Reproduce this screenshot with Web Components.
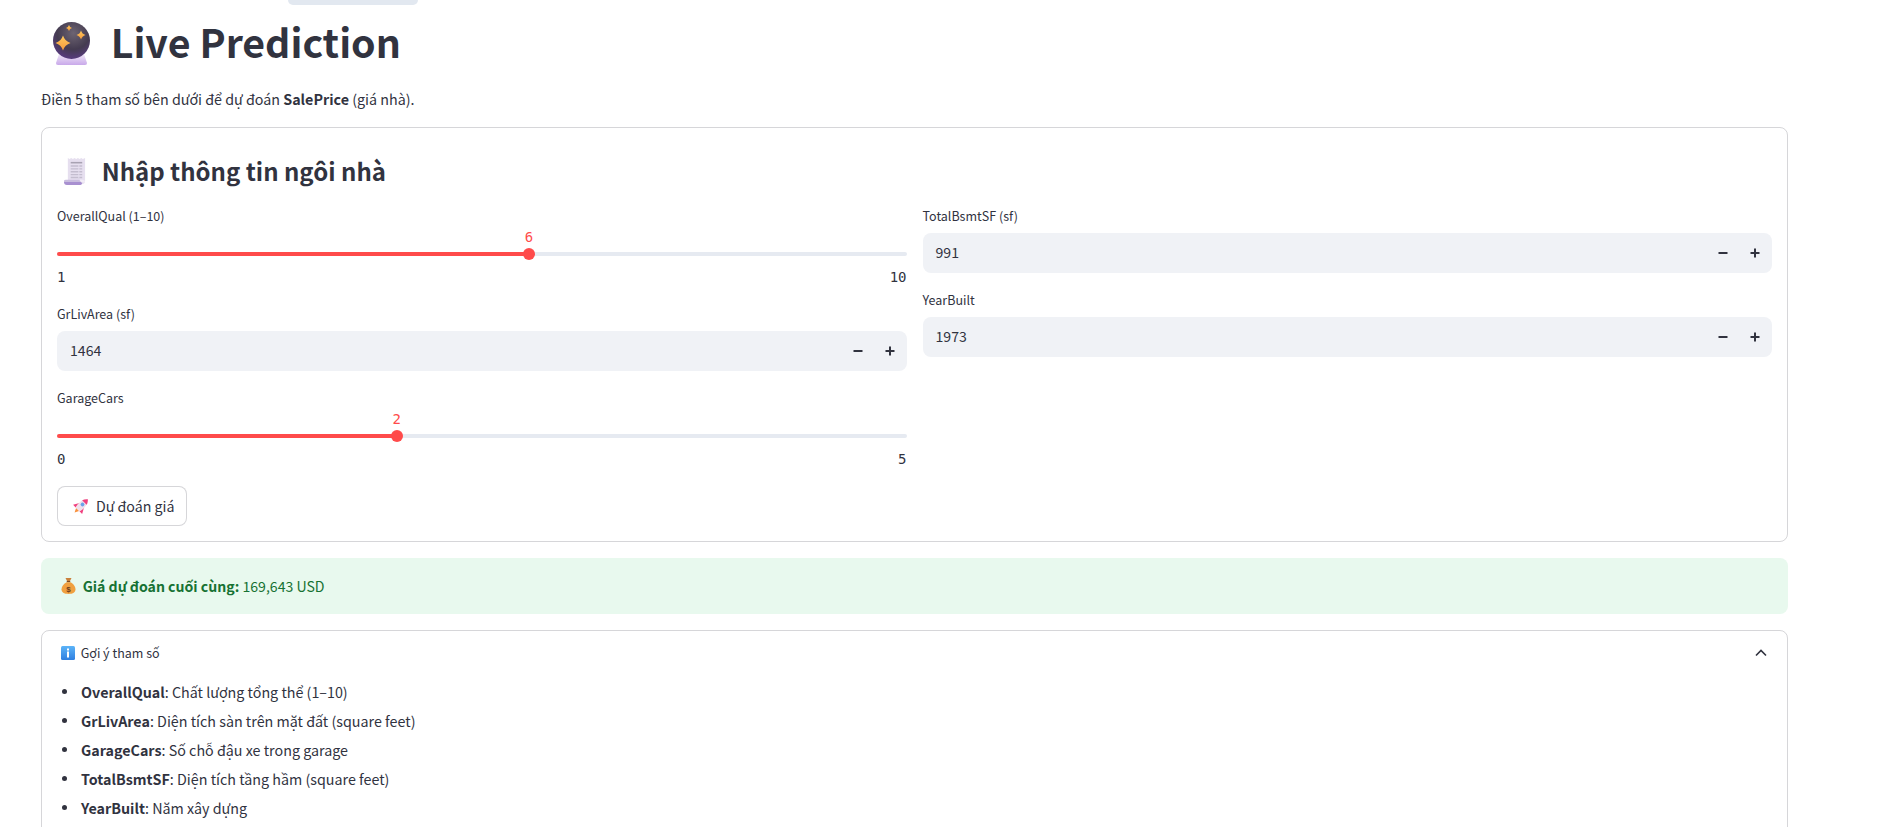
<!DOCTYPE html>
<html lang="vi">
<head>
<meta charset="utf-8">
<title>Live Prediction</title>
<style>
  html, body { margin: 0; height: 827px; overflow: hidden; background: #fff; }
  body {
    font-family: "Noto Sans CJK JP", "Noto Sans", sans-serif;
    font-size: 14.3px;
    color: #31333f;
  }
  b { font-weight: 600; }
</style>
</head>
<body>
<app-page>
  <page-title>Live Prediction</page-title>
  <intro-text>Điền 5 tham số bên dưới để dự đoán <b>SalePrice</b> (giá nhà).</intro-text>
  <form-card>
    <card-heading slot="heading">Nhập thông tin ngôi nhà</card-heading>
    <range-field slot="left" label="OverallQual (1–10)" min="1" max="10" value="6"></range-field>
    <number-field slot="left" label="GrLivArea (sf)" value="1464"></number-field>
    <range-field slot="left" label="GarageCars" min="0" max="5" value="2"></range-field>
    <number-field slot="right" label="TotalBsmtSF (sf)" value="991"></number-field>
    <number-field slot="right" label="YearBuilt" value="1973"></number-field>
    <predict-button slot="footer">Dự đoán giá</predict-button>
  </form-card>
  <success-box><b>Giá dự đoán cuối cùng:</b> 169,643 USD</success-box>
  <hint-expander title="Gợi ý tham số">
    <hint-item><b>OverallQual</b>: Chất lượng tổng thể (1–10)</hint-item>
    <hint-item><b>GrLivArea</b>: Diện tích sàn trên mặt đất (square feet)</hint-item>
    <hint-item><b>GarageCars</b>: Số chỗ đậu xe trong garage</hint-item>
    <hint-item><b>TotalBsmtSF</b>: Diện tích tầng hầm (square feet)</hint-item>
    <hint-item><b>YearBuilt</b>: Năm xây dựng</hint-item>
  </hint-expander>
</app-page>

<script>
const EMOJI = {
  ball: `<svg viewBox="0 0 37 43" width="37" height="43">
    <defs>
      <radialGradient id="b1" cx=".55" cy=".3" r=".8"><stop offset="0" stop-color="#6d6472"/><stop offset=".55" stop-color="#443b50"/><stop offset="1" stop-color="#5f3b8f"/></radialGradient>
      <linearGradient id="b2" x1="0" y1="0" x2="0" y2="1"><stop offset="0" stop-color="#efe6f7"/><stop offset="1" stop-color="#c9a9ea"/></linearGradient>
      <linearGradient id="b3" x1="0" y1="0" x2="0" y2="1"><stop offset="0" stop-color="#ffc95e"/><stop offset="1" stop-color="#f59a3c"/></linearGradient>
    </defs>
    <path d="M6 32h25l3 9q.3 2-2 2H5q-2.300 0-2-2z" fill="url(#b2)"/>
    <circle cx="18.500" cy="18.500" r="18.500" fill="url(#b1)"/>
    <path d="M10 13.500q1.800 5.700 7.500 7.500q-5.700 1.800-7.500 7.500q-1.800-5.700-7.500-7.500q5.700-1.800 7.500-7.500z" fill="url(#b3)"/>
    <path d="M28 8.500q1 3.500 4.500 4.500q-3.500 1-4.500 4.500q-1-3.500-4.500-4.500q3.500-1 4.500-4.500z" fill="url(#b3)"/>
    <path d="M16 3q.7 2.300 3 3q-2.300.7-3 3q-.7-2.300-3-3q2.300-.7 3-3z" fill="url(#b3)"/>
  </svg>`,
  receipt: `<svg viewBox="0 0 24 28" width="23" height="27">
    <path d="M4 0l1.700 1L7.500 0l1.800 1L11 0l1.800 1L14.500 0l1.800 1L18 0l1.700 1L22 0v24q0 3-3 3H4z" fill="#e6dfef"/>
    <path d="M7 4h12v1.600H7z" fill="#a8a2b2"/>
    <path d="M7 7.500h12v1.500H7zM7 10.500h12v1.500H7zM7 13.500h12v1.500H7zM7 16.500h12v1.500H7zM7 19.500h12v1.500H7z" fill="#c4bdcf"/>
    <path d="M15 7v14h1V7z" fill="#e6dfef"/>
    <path d="M0 24q0-1.500 2-1.500h14q2 0 2 2.500H2q-2 0-2 1.500z" fill="#c9bdde"/>
    <path d="M0 25q0 3 3 3h14q2 0 2-3H3z" fill="#a890d0"/>
    <path d="M16 22.500h3q3 0 3 2v1h-4z" fill="#f1ecf6"/>
  </svg>`,
  rocket: `<svg viewBox="1 1 15 15" width="16" height="16">
    <g transform="rotate(45 8.500 8.500)">
      <path d="M6.500 13h4L8.500 17z" fill="#f9913d"/>
      <path d="M5.500 7.500L2.500 13H6zM11.500 7.500l3 5.500H11z" fill="#f0407e"/>
      <path d="M8.500-.5C12.500 3 12.500 9 11 13H6C4.500 9 4.500 3 8.500-.5z" fill="#efe0ec"/>
      <path d="M8.500-.5C10 .8 11 2.400 11.500 4h-6C6 2.400 7 .8 8.500-.5z" fill="#f0407e"/>
      <circle cx="8.500" cy="6.500" r="1.800" fill="#6aa2ea"/>
    </g>
  </svg>`,
  bag: `<svg viewBox="0 0 15 16" width="15" height="16">
    <path d="M4.500 0h6L9 3H6z" fill="#c9803a"/>
    <path d="M5.800 3h3.400l.1 1.300H5.700z" fill="#7a4a24"/>
    <path d="M5.600 4.300h3.800c2.800 1.300 5.100 4.200 5.100 7 0 3-2.400 4.700-7 4.700s-7-1.700-7-4.700c0-2.800 2.300-5.700 5.100-7z" fill="#f0a040"/>
    <text x="7.500" y="13.500" text-anchor="middle" font-size="8" font-weight="700" fill="#6b3d1c" font-family="Liberation Sans, sans-serif">$</text>
  </svg>`,
  info: `<svg viewBox="0 0 14 14" width="14" height="14">
    <defs><linearGradient id="i1" x1="0" y1="0" x2="0" y2="1"><stop offset="0" stop-color="#5cb4f8"/><stop offset="1" stop-color="#2f7fe0"/></linearGradient></defs>
    <rect width="14" height="14" rx="1.500" fill="url(#i1)"/>
    <rect x="6" y="2.500" width="2" height="2" fill="#fff"/>
    <rect x="6" y="5.500" width="2" height="6" fill="#fff"/>
  </svg>`
};

class AppEmoji extends HTMLElement {
  constructor() {
    super();
    this.attachShadow({ mode: 'open' });
  }

  connectedCallback() {
    this.shadowRoot.innerHTML = `<style>:host { display: inline-flex; flex: none; } svg { display: block; }</style>${EMOJI[this.getAttribute('name')]}`;
  }
}

const pageTemplate = document.createElement('template');
pageTemplate.innerHTML = `
  <style>
    :host {
      display: block;
      position: relative;
      padding: 13px 92px 0 41px;
    }
    .tab {
      position: absolute;
      left: 288px;
      top: 0;
      width: 130px;
      height: 5px;
      background: #e2e8f0;
      border-radius: 0 0 6px 6px;
    }
    .stack {
      display: flex;
      flex-direction: column;
    }
  </style>
  <div class="tab"></div>
  <div class="stack"><slot></slot></div>
`;

class AppPage extends HTMLElement {
  constructor() {
    super();
    this.attachShadow({ mode: 'open' });
    this.shadowRoot.append(pageTemplate.content.cloneNode(true));
  }
}

class PageTitle extends HTMLElement {
  constructor() {
    super();
    this.attachShadow({ mode: 'open' }).innerHTML = `
      <style>
        :host {
          display: flex;
          align-items: center;
          height: 60px;
          padding-left: 12px;
          gap: 20.7px;
          font-size: 39.3px;
          font-weight: 700;
          line-height: 60px;
          white-space: nowrap;
        }
        span { margin-top: -5px; }
      </style>
      <app-emoji name="ball"></app-emoji><span><slot></slot></span>
    `;
  }
}

class IntroText extends HTMLElement {
  constructor() {
    super();
    this.attachShadow({ mode: 'open' }).innerHTML = `
      <style>
        :host {
          display: block;
          margin: 13px 0 15px;
          font-size: 14.3px;
          line-height: 26px;
        }
      </style>
      <slot></slot>
    `;
  }
}

class FormCard extends HTMLElement {
  constructor() {
    super();
    this.attachShadow({ mode: 'open' }).innerHTML = `
      <style>
        :host {
          display: block;
          border: 1px solid rgba(49, 51, 63, 0.2);
          border-radius: 8px;
          padding: 15px;
        }
        .cols {
          display: grid;
          grid-template-columns: 1fr 1fr;
          column-gap: 16px;
        }
        .col {
          display: flex;
          flex-direction: column;
          gap: 16px;
        }
        .footer {
          display: flex;
          margin-top: 17px;
        }
      </style>
      <slot name="heading"></slot>
      <div class="cols">
        <div class="col"><slot name="left"></slot></div>
        <div class="col"><slot name="right"></slot></div>
      </div>
      <div class="footer"><slot name="footer"></slot></div>
    `;
  }
}

class CardHeading extends HTMLElement {
  constructor() {
    super();
    this.attachShadow({ mode: 'open' }).innerHTML = `
      <style>
        :host {
          display: flex;
          align-items: center;
          box-sizing: border-box;
          height: 62px;
          padding: 0 0 6px 7px;
          gap: 14.7px;
          font-size: 24px;
          font-weight: 600;
          white-space: nowrap;
        }
        span { margin-top: -2px; }
      </style>
      <app-emoji name="receipt"></app-emoji><span><slot></slot></span>
    `;
  }
}

const fieldLabelCss = `
  .label {
    height: 24px;
    font-size: 12.5px;
    line-height: 22px;
    white-space: nowrap;
  }
`;

class RangeField extends HTMLElement {
  constructor() {
    super();
    this.attachShadow({ mode: 'open' });
  }

  connectedCallback() {
    const min = Number(this.getAttribute('min'));
    const max = Number(this.getAttribute('max'));
    const value = Number(this.getAttribute('value'));
    const pct = ((value - min) / (max - min)) * 100;
    this.shadowRoot.innerHTML = `
      <style>
        :host { display: block; height: 82px; }
        ${fieldLabelCss}
        .track {
          position: relative;
          height: 4px;
          margin-top: 23px;
          border-radius: 2px;
          background: #e6eaf1;
        }
        .fill {
          height: 4px;
          border-radius: 2px;
          background: #ff4b4b;
          width: ${pct}%;
        }
        .thumb {
          position: absolute;
          left: ${pct}%;
          top: -4px;
          width: 12px;
          height: 12px;
          margin-left: -6px;
          border-radius: 50%;
          background: #ff4b4b;
        }
        .value {
          position: absolute;
          left: ${pct}%;
          top: -25px;
          transform: translateX(-50%);
          color: #ff4b4b;
          font: 14px/20px "DejaVu Sans Mono", monospace;
        }
        .ticks {
          display: flex;
          justify-content: space-between;
          margin-top: 11px;
          font: 14px/20px "DejaVu Sans Mono", monospace;
        }
      </style>
      <div class="label">${this.getAttribute('label')}</div>
      <div class="track">
        <div class="fill"></div>
        <div class="thumb"></div>
        <div class="value">${value}</div>
      </div>
      <div class="ticks"><span>${min}</span><span>${max}</span></div>
    `;
  }
}

class NumberField extends HTMLElement {
  constructor() {
    super();
    this.attachShadow({ mode: 'open' });
  }

  connectedCallback() {
    this.shadowRoot.innerHTML = `
      <style>
        :host { display: block; }
        ${fieldLabelCss}
        .box {
          display: flex;
          align-items: center;
          height: 40px;
          margin-top: 4px;
          padding: 0 1px 0 13px;
          border-radius: 8px;
          background: #f0f2f6;
          font-size: 14.1px;
        }
        .num { flex: 1; margin-top: -2px; }
        .step {
          width: 32px;
          height: 40px;
          display: flex;
          align-items: center;
          justify-content: center;
        }
      </style>
      <div class="label">${this.getAttribute('label')}</div>
      <div class="box">
        <span class="num">${this.getAttribute('value')}</span>
        <span class="step"><svg width="10" height="10" viewBox="0 0 10 10"><path d="M.5 5h9" stroke="#31333f" stroke-width="2"/></svg></span>
        <span class="step"><svg width="10" height="10" viewBox="0 0 10 10"><path d="M.5 5h9M5 .5v9" stroke="#31333f" stroke-width="2"/></svg></span>
      </div>
    `;
  }
}

class PredictButton extends HTMLElement {
  constructor() {
    super();
    this.attachShadow({ mode: 'open' }).innerHTML = `
      <style>
        :host {
          display: inline-flex;
          align-items: center;
          box-sizing: border-box;
          height: 40px;
          width: 130px;
          padding-left: 15px;
          gap: 7px;
          border: 1px solid rgba(49, 51, 63, 0.2);
          border-radius: 8px;
          background: #fff;
          font-size: 14.2px;
          white-space: nowrap;
        }
        span { margin-top: -1px; }
      </style>
      <app-emoji name="rocket"></app-emoji><span><slot></slot></span>
    `;
  }
}

class SuccessBox extends HTMLElement {
  constructor() {
    super();
    this.attachShadow({ mode: 'open' }).innerHTML = `
      <style>
        :host {
          display: flex;
          align-items: center;
          gap: 7px;
          height: 56px;
          margin-top: 16px;
          padding-left: 19.7px;
          border-radius: 8px;
          background: #e8f9ee;
          color: #177233;
          font-size: 14.1px;
        }
      </style>
      <app-emoji name="bag"></app-emoji><span><slot></slot></span>
    `;
  }
}

class HintExpander extends HTMLElement {
  constructor() {
    super();
    this.attachShadow({ mode: 'open' }).innerHTML = `
      <style>
        :host {
          display: block;
          margin-top: 16px;
          border: 1px solid rgba(49, 51, 63, 0.2);
          border-radius: 8px;
          height: 300px;
        }
        .head {
          display: flex;
          align-items: center;
          height: 43px;
          padding: 0 16px 0 19px;
          gap: 5.7px;
          font-size: 12.5px;
        }
        .head span { flex: 1; }
        .list {
          display: flex;
          flex-direction: column;
          margin-top: 3px;
          padding-left: 19.5px;
        }
      </style>
      <div class="head">
        <app-emoji name="info"></app-emoji>
        <span>${this.getAttribute('title')}</span>
        <svg width="20" height="20" viewBox="0 0 20 20"><path d="M5 12.500L10 7.500l5 5" fill="none" stroke="#31333f" stroke-width="1.600"/></svg>
      </div>
      <div class="list"><slot></slot></div>
    `;
  }
}

class HintItem extends HTMLElement {
  constructor() {
    super();
    this.attachShadow({ mode: 'open' }).innerHTML = `
      <style>
        :host {
          display: flex;
          align-items: center;
          gap: 14.5px;
          height: 28.9px;
          font-size: 14.3px;
          white-space: nowrap;
        }
        .dot {
          width: 5px;
          height: 5px;
          border-radius: 50%;
          background: #31333f;
        }
      </style>
      <span class="dot"></span><span><slot></slot></span>
    `;
  }
}

customElements.define('app-emoji', AppEmoji);
customElements.define('app-page', AppPage);
customElements.define('page-title', PageTitle);
customElements.define('intro-text', IntroText);
customElements.define('form-card', FormCard);
customElements.define('card-heading', CardHeading);
customElements.define('range-field', RangeField);
customElements.define('number-field', NumberField);
customElements.define('predict-button', PredictButton);
customElements.define('success-box', SuccessBox);
customElements.define('hint-expander', HintExpander);
customElements.define('hint-item', HintItem);
</script>
</body>
</html>
